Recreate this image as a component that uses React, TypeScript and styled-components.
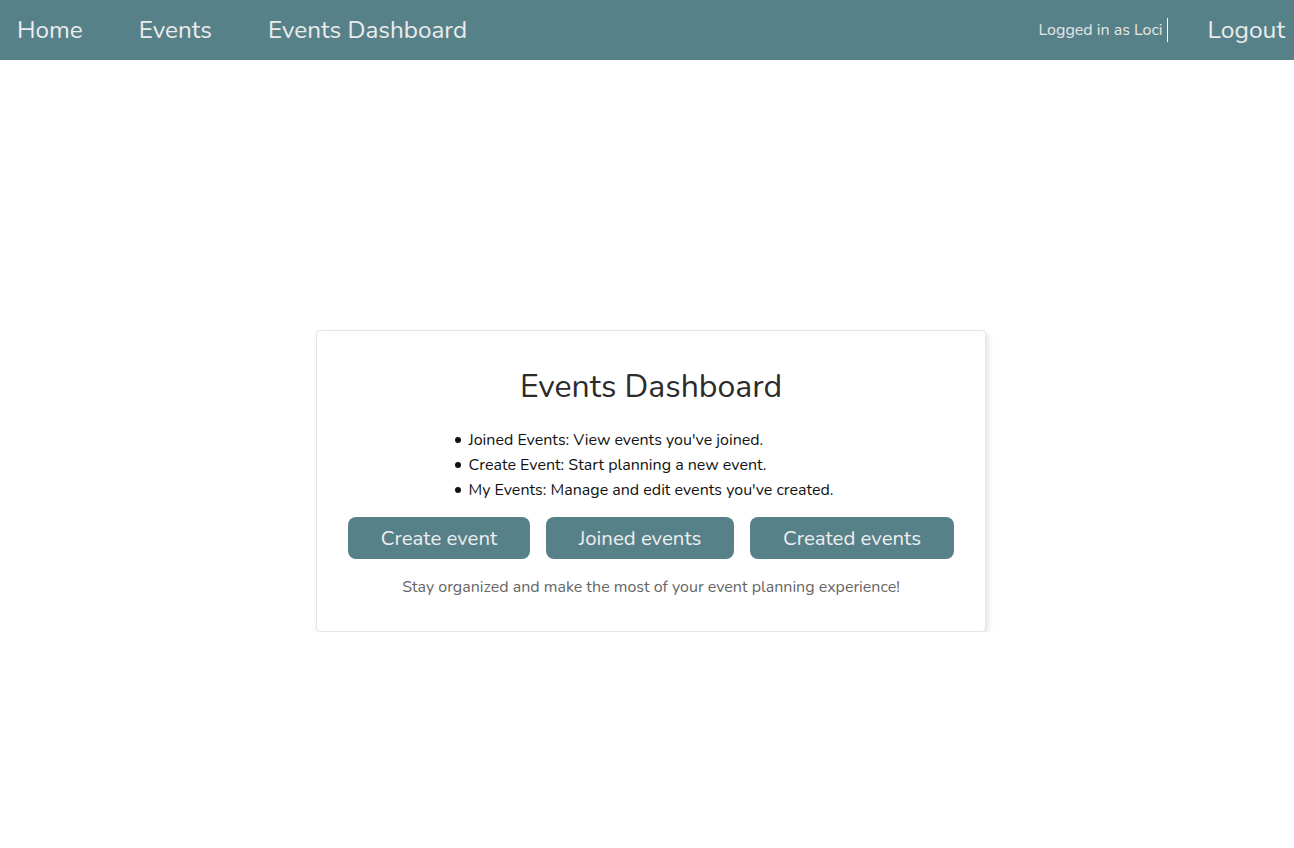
import styled, { createGlobalStyle } from "styled-components";

const GlobalStyle = createGlobalStyle`
    body {
        margin: 0;
        font-family: "Nunito", Lato, "Noto Sans", sans-serif;
        background: #ffffff;
    }
`;

const Navbar = styled.nav`
    height: 60px;
    background: #578189;
    display: flex;
    align-items: center;
    justify-content: space-between;
    padding: 0 9px 1px 17px;
    box-sizing: border-box;
`;

const NavLinks = styled.div`
    display: flex;
    align-items: center;
    gap: 56px;
`;

const NavLink = styled.a`
    color: #ececec;
    font-size: 24.3px;
    text-decoration: none;
    cursor: pointer;
`;

const UserArea = styled.div`
    display: flex;
    align-items: center;
`;

const UserLabel = styled.span`
    color: #e6e6e6;
    font-size: 16px;
    padding-right: 4px;
    border-right: 1px solid #ffffff;
    line-height: 24px;
`;

const LogoutLink = styled(NavLink)`
    margin-left: 40px;
    font-size: 24.6px;
`;

const Main = styled.main`
    display: flex;
    justify-content: center;
    padding: 270px 0 0 8px;
`;

const Card = styled.section`
    width: 670px;
    box-sizing: border-box;
    border: 1px solid #e6e6e6;
    border-radius: 4px;
    box-shadow: 2px 3px 6px rgba(0, 0, 0, 0.12);
    padding: 34px 32px 33px;
    display: flex;
    flex-direction: column;
    align-items: center;
    background: #ffffff;
`;

const Title = styled.h1`
    margin: 0;
    font-size: 32px;
    font-weight: 400;
    color: #2b2b2b;
    line-height: 44px;
`;

const FeatureList = styled.ul`
    margin: 19px 0 0 -14px;
    padding-left: 14px;
    list-style: none;
    font-size: 16px;
    line-height: 25px;
    color: #111111;

    li {
        position: relative;
    }

    li::before {
        content: "";
        position: absolute;
        left: -14px;
        top: 9px;
        width: 6px;
        height: 6px;
        border-radius: 50%;
        background: #111111;
    }
`;

const ButtonRow = styled.div`
    display: flex;
    gap: 16px;
    margin-top: 14px;
`;

const ActionButton = styled.button<{ $width: number }>`
    width: ${({ $width }) => $width}px;
    height: 42px;
    border: none;
    border-radius: 8px;
    background: #578189;
    color: #eeeeee;
    font-family: inherit;
    font-size: 20.4px;
    cursor: pointer;
`;

const Footnote = styled.p`
    margin: 17px 0 0;
    font-size: 16px;
    color: #666666;
`;

export default function App() {
    return (
        <>
            <GlobalStyle />
            <Navbar>
                <NavLinks>
                    <NavLink>Home</NavLink>
                    <NavLink>Events</NavLink>
                    <NavLink>Events Dashboard</NavLink>
                </NavLinks>
                <UserArea>
                    <UserLabel>Logged in as Loci</UserLabel>
                    <LogoutLink>Logout</LogoutLink>
                </UserArea>
            </Navbar>
            <Main>
                <Card>
                    <Title>Events Dashboard</Title>
                    <FeatureList>
                        <li>Joined Events: View events you've joined.</li>
                        <li>Create Event: Start planning a new event.</li>
                        <li>My Events: Manage and edit events you've created.</li>
                    </FeatureList>
                    <ButtonRow>
                        <ActionButton $width={182}>Create event</ActionButton>
                        <ActionButton $width={188}>Joined events</ActionButton>
                        <ActionButton $width={204}>Created events</ActionButton>
                    </ButtonRow>
                    <Footnote>
                        Stay organized and make the most of your event planning experience!
                    </Footnote>
                </Card>
            </Main>
        </>
    );
}
